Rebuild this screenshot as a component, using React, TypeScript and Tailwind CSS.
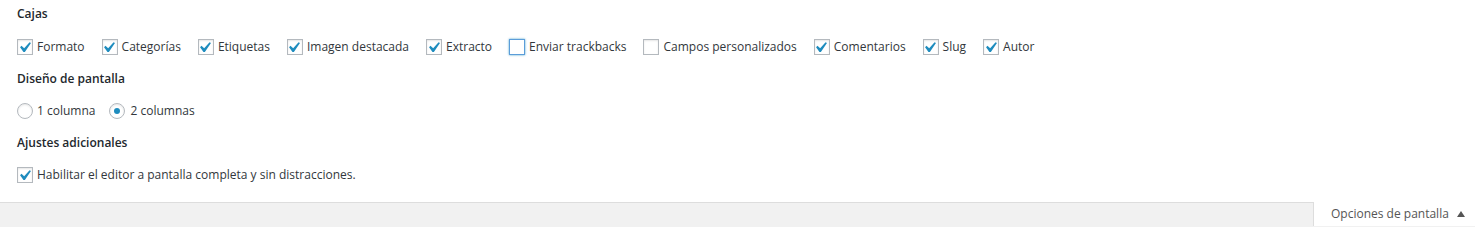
import React from 'react';

const font = { fontFamily: '"Open Sans", "Liberation Sans", Arial, sans-serif' };

function Check({ checked, focused }: { checked?: boolean; focused?: boolean }) {
    return (
        <span
            className={`w-4 h-4 shrink-0 bg-white border flex items-center justify-center overflow-visible ${focused ? 'border-[#5b9dd9] shadow-[0_0_2px_rgba(30,140,190,0.8)]' : 'border-[#b4b9be] shadow-[inset_0_1px_2px_rgba(0,0,0,0.1)]'}`}
        >
            {checked && (
                <svg width="21" height="21" viewBox="0 0 20 20" className="-m-[3px] shrink-0 -translate-x-[1px]">
                    <path d="M14.83 4.89l1.34.94-5.81 8.38H9.02L5.78 9.67l1.34-1.25 2.57 2.4z" fill="#1e8cbe" />
                </svg>
            )}
        </span>
    );
}

function Radio({ checked }: { checked?: boolean }) {
    return (
        <span className="w-4 h-4 shrink-0 rounded-full bg-white border border-[#b4b9be] shadow-[inset_0_1px_2px_rgba(0,0,0,0.1)] flex items-center justify-center">
            {checked && <span className="w-[6px] h-[6px] rounded-full bg-[#1e8cbe]" />}
        </span>
    );
}

const boxes: { label: string; checked: boolean; focused?: boolean }[] = [
    { label: 'Formato', checked: true },
    { label: 'Categorías', checked: true },
    { label: 'Etiquetas', checked: true },
    { label: 'Imagen destacada', checked: true },
    { label: 'Extracto', checked: true },
    { label: 'Enviar trackbacks', checked: false, focused: true },
    { label: 'Campos personalizados', checked: false },
    { label: 'Comentarios', checked: true },
    { label: 'Slug', checked: true },
    { label: 'Autor', checked: true },
];

export default function App() {
    return (
        <div className="w-[1475px] h-[227px] bg-[#f1f1f1] text-[12px] text-[#32373c] overflow-hidden" style={font}>
            <div className="bg-white border-b border-[#ddd] h-[203px] pl-[17px] pt-[4px]">
                <h5 className="font-semibold text-[#23282d] leading-[20px]">Cajas</h5>
                <div className="flex items-center mt-[13px] h-[20px] gap-[17px]">
                    {boxes.map((b) => (
                        <label key={b.label} className="flex items-center gap-[4px] whitespace-nowrap">
                            <Check checked={b.checked} focused={b.focused} />
                            <span>{b.label}</span>
                        </label>
                    ))}
                </div>

                <h5 className="font-semibold text-[#23282d] leading-[20px] mt-[12px]">Diseño de pantalla</h5>
                <div className="flex items-center mt-[12px] h-[20px] gap-[14px]">
                    <label className="flex items-center gap-[4px]">
                        <Radio />
                        <span>1 columna</span>
                    </label>
                    <label className="flex items-center gap-[5px]">
                        <Radio checked />
                        <span>2 columnas</span>
                    </label>
                </div>

                <h5 className="font-semibold text-[#23282d] leading-[20px] mt-[12px]">Ajustes adicionales</h5>
                <div className="flex items-center mt-[12px] h-[20px]">
                    <label className="flex items-center gap-[4px]">
                        <Check checked />
                        <span>Habilitar el editor a pantalla completa y sin distracciones.</span>
                    </label>
                </div>
            </div>

            <div className="flex justify-end">
                <button className="h-[24px] w-[162px] bg-white border-l border-[#ddd] flex items-center pl-[17px] gap-[8px] text-[#555] -mt-px">
                    <span>Opciones de pantalla</span>
                    <svg width="8" height="6" viewBox="0 0 8 6">
                        <path d="M0 6 L4 0 L8 6 Z" fill="#555" />
                    </svg>
                </button>
            </div>
        </div>
    );
}
